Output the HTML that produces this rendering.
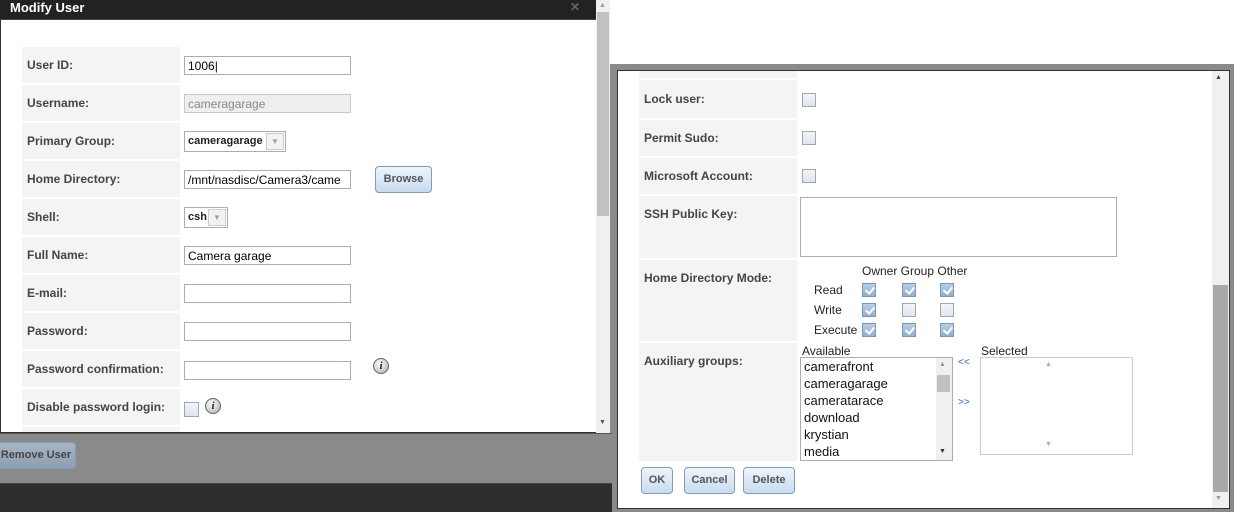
<!DOCTYPE html>
<html><head><meta charset="utf-8"><style>
*{box-sizing:border-box;margin:0;padding:0}
body{width:1248px;height:512px;overflow:hidden;background:#fff;position:relative;font-family:"Liberation Sans",Tahoma,sans-serif}
.abs{position:absolute}
.lab{position:absolute;background:#f4f4f4;font-weight:bold;font-size:12px;color:#444;padding-left:5px}
.inp{position:absolute;height:19px;border:1px solid #abadb3;background:#fff;font-size:12px;padding:2px 3px;color:#000;white-space:nowrap;overflow:hidden}
.sel{position:absolute;height:21px;border:1px solid #abadb3;background:#fff;font-size:11px;font-weight:bold;padding:0 3px;line-height:19px;color:#222;white-space:nowrap}
.cb{position:absolute;width:14px;height:14px;border:1px solid #a3a7ad;background:linear-gradient(#f2f5f8,#dde5ee)}
.cbk{position:absolute;width:14px;height:14px;border:1px solid #7d98b5;background:linear-gradient(#b8cfe6,#8fb0d2)}
.cbk::after{content:"";position:absolute;left:4px;top:1px;width:4px;height:7px;border:solid #fff;border-width:0 2px 2px 0;transform:rotate(40deg)}
.btn{position:absolute;border:1px solid #7f9db9;border-radius:4px;background:linear-gradient(#eef5fc,#c7dcf0);font-weight:bold;font-size:11px;color:#555;text-align:center}
.info{position:absolute;width:16px;height:16px;border-radius:50%;border:1px solid #666;background:radial-gradient(circle at 40% 35%,#fff,#aaa);font:italic bold 11px "Liberation Serif",serif;color:#222;text-align:center;line-height:14px}
.t{position:absolute;font-size:12px;color:#222}
</style></head><body>
<div class="abs" style="left:610px;top:64px;width:624px;height:448px;background:#8a8a8a"></div>
<div class="abs" style="left:0;top:433px;width:612px;height:50px;background:#8a8a8a;border-top:1px solid #555"></div>
<div class="abs" style="left:0;top:483px;width:612px;height:29px;background:#2e2e2e;border-top:1px solid #444"></div>
<div class="btn" style="left:-4px;top:442px;width:80px;height:27px;line-height:25px;background:linear-gradient(#a7b5c3,#8d9fb2);color:#444">Remove User</div>

<div class="abs" style="left:0;top:0;width:597px;height:433px;background:#fff;border:1px solid #333"></div>
<div class="abs" style="left:0;top:0;width:597px;height:20px;background:#222;color:#fff;font-weight:bold;font-size:13px;padding:0 10px;line-height:16px;border-bottom:1px solid #444">Modify User</div>
<div class="abs" style="left:570px;top:0;color:#666;font-size:12px;font-weight:bold">✕</div>
<div class="abs" style="left:596px;top:0;width:14px;height:433px;background:#f0f0f0"></div>
<div class="abs" style="left:597px;top:12px;width:12px;height:204px;background:#c1c1c1"></div>
<div class="abs" style="left:599px;top:2px;font-size:7px;color:#999">▲</div>
<div class="abs" style="left:599px;top:419px;font-size:7px;color:#555">▼</div>

<div class="lab" style="left:22px;top:47px;width:158px;height:36px;line-height:36px">User ID:</div>
<div class="inp" style="left:184px;top:56px;width:167px">1006|</div>
<div class="lab" style="left:22px;top:85px;width:158px;height:36px;line-height:36px">Username:</div>
<div class="inp" style="left:184px;top:94px;width:167px;background:#efefef;color:#888;border-color:#c9c9c9">cameragarage</div>
<div class="lab" style="left:22px;top:123px;width:158px;height:36px;line-height:36px">Primary Group:</div>
<div class="sel" style="left:184px;top:131px;width:102px">cameragarage</div>
<div class="abs" style="left:266px;top:133px;width:18px;height:17px;border:1px solid #ccc;background:#f2f2f2;font-size:8px;color:#8aa;text-align:center;line-height:15px">▼</div>
<div class="lab" style="left:22px;top:161px;width:158px;height:36px;line-height:36px">Home Directory:</div>
<div class="inp" style="left:184px;top:170px;width:167px">/mnt/nasdisc/Camera3/came</div>
<div class="btn" style="left:375px;top:166px;width:57px;height:27px;line-height:25px">Browse</div>
<div class="lab" style="left:22px;top:199px;width:158px;height:36px;line-height:36px">Shell:</div>
<div class="sel" style="left:184px;top:207px;width:44px">csh</div>
<div class="abs" style="left:208px;top:209px;width:18px;height:17px;border:1px solid #ccc;background:#f2f2f2;font-size:8px;color:#8aa;text-align:center;line-height:15px">▼</div>
<div class="lab" style="left:22px;top:237px;width:158px;height:36px;line-height:36px">Full Name:</div>
<div class="inp" style="left:184px;top:246px;width:167px">Camera garage</div>
<div class="lab" style="left:22px;top:275px;width:158px;height:36px;line-height:36px">E-mail:</div>
<div class="inp" style="left:184px;top:284px;width:167px"></div>
<div class="lab" style="left:22px;top:313px;width:158px;height:36px;line-height:36px">Password:</div>
<div class="inp" style="left:184px;top:322px;width:167px"></div>
<div class="lab" style="left:22px;top:351px;width:158px;height:36px;line-height:36px">Password confirmation:</div>
<div class="inp" style="left:184px;top:361px;width:167px"></div>
<div class="info" style="left:373px;top:358px">i</div>
<div class="lab" style="left:22px;top:389px;width:158px;height:36px;line-height:36px">Disable password login:</div>
<div class="cb" style="left:184px;top:402px;width:15px;height:15px"></div>
<div class="info" style="left:205px;top:398px">i</div>
<div class="lab" style="left:22px;top:427px;width:158px;height:5px"></div>

<div class="abs" style="left:617px;top:70px;width:613px;height:439px;background:#fff;border:1px solid #333"></div>
<div class="abs" style="left:1212px;top:71px;width:17px;height:437px;background:#f0f0f0"></div>
<div class="abs" style="left:1213px;top:285px;width:15px;height:207px;background:#a8a8a8"></div>
<div class="abs" style="left:1215px;top:74px;font-size:7px;color:#444">▲</div>
<div class="abs" style="left:1215px;top:495px;font-size:7px;color:#999">▼</div>

<div class="lab" style="left:639px;top:71px;width:158px;height:7px"></div>
<div class="lab" style="left:639px;top:80px;width:158px;height:38px;line-height:38px">Lock user:</div>
<div class="cb" style="left:802px;top:93px"></div>
<div class="lab" style="left:639px;top:120px;width:158px;height:36px;line-height:36px">Permit Sudo:</div>
<div class="cb" style="left:802px;top:131px"></div>
<div class="lab" style="left:639px;top:158px;width:158px;height:36px;line-height:36px">Microsoft Account:</div>
<div class="cb" style="left:802px;top:169px"></div>
<div class="lab" style="left:639px;top:196px;width:158px;height:62px;padding-top:11px">SSH Public Key:</div>
<div class="abs" style="left:800px;top:197px;width:317px;height:60px;border:1px solid #abadb3"></div>
<div class="lab" style="left:639px;top:260px;width:158px;height:81px;padding-top:11px">Home Directory Mode:</div>
<div class="t" style="left:862px;top:264px">Owner Group Other</div>
<div class="t" style="left:814px;top:283px">Read</div>
<div class="t" style="left:814px;top:303px">Write</div>
<div class="t" style="left:814px;top:323px">Execute</div>
<div class="cbk" style="left:862px;top:283px"></div><div class="cbk" style="left:902px;top:283px"></div><div class="cbk" style="left:940px;top:283px"></div>
<div class="cbk" style="left:862px;top:303px"></div><div class="cb" style="left:902px;top:303px"></div><div class="cb" style="left:940px;top:303px"></div>
<div class="cbk" style="left:862px;top:323px"></div><div class="cbk" style="left:902px;top:323px"></div><div class="cbk" style="left:940px;top:323px"></div>
<div class="lab" style="left:639px;top:343px;width:158px;height:118px;padding-top:11px">Auxiliary groups:</div>
<div class="t" style="left:802px;top:344px">Available</div>
<div class="t" style="left:981px;top:344px">Selected</div>
<div class="abs" style="left:800px;top:357px;width:153px;height:104px;border:1px solid #abadb3;font-size:13px;color:#111;padding:0 3px;line-height:17px">camerafront<br>cameragarage<br>cameratarace<br>download<br>krystian<br>media</div>
<div class="abs" style="left:936px;top:358px;width:16px;height:102px;background:#f0f0f0"></div>
<div class="abs" style="left:937px;top:375px;width:13px;height:17px;background:#c1c1c1"></div>
<div class="abs" style="left:939px;top:361px;font-size:7px;color:#999">▲</div>
<div class="abs" style="left:939px;top:448px;font-size:7px;color:#333">▼</div>
<div class="abs" style="left:958px;top:357px;font-size:10px;color:#36c">&lt;&lt;</div>
<div class="abs" style="left:958px;top:397px;font-size:10px;color:#36c">&gt;&gt;</div>
<div class="abs" style="left:980px;top:357px;width:153px;height:98px;border:1px solid #ccc"></div>
<div class="abs" style="left:1045px;top:361px;font-size:7px;color:#aaa">▲</div>
<div class="abs" style="left:1045px;top:441px;font-size:7px;color:#aaa">▼</div>
<div class="btn" style="left:641px;top:467px;width:32px;height:27px;line-height:25px">OK</div>
<div class="btn" style="left:684px;top:467px;width:51px;height:27px;line-height:25px">Cancel</div>
<div class="btn" style="left:743px;top:467px;width:52px;height:27px;line-height:25px">Delete</div>
</body></html>
